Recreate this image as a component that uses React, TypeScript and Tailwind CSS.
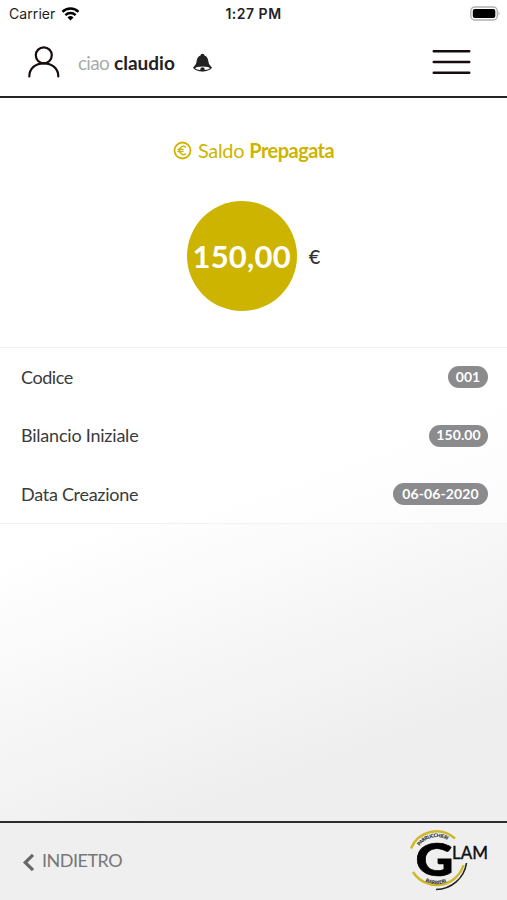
import type { ReactNode } from "react";

const rows = [
  { label: "Codice", value: "001", labelClass: "tracking-[-0.45px]", pill: "w-[40px]" },
  { label: "Bilancio Iniziale", value: "150.00", labelClass: "tracking-[-0.22px]", pill: "w-[59px]" },
  { label: "Data Creazione", value: "06-06-2020", labelClass: "tracking-[-0.28px]", pill: "w-[95px]" },
];

function StatusBar() {
  return (
    <div className="grid h-[27px] grid-cols-3 items-center pl-[9px] pr-[6px] font-['Inter',sans-serif] text-[14px] text-[#222]">
      <div className="flex items-center gap-[6px]">
        <span className="tracking-[0.08px]">Carrier</span>
        <svg width="19" height="14" viewBox="0 0 18 14" fill="none" stroke="#000" strokeWidth="2.5">
          <path d="M1 4.9a11.4 11.4 0 0 1 16 0" />
          <path d="M3.9 8.2a7.3 7.3 0 0 1 10.2 0" />
          <path d="M9 13.5 6 10.5a4.3 4.3 0 0 1 6 0Z" fill="#000" stroke="none" />
        </svg>
      </div>
      <div className="-ml-[3px] whitespace-nowrap text-center font-semibold tracking-[0.5px]">1:27 PM</div>
      <svg className="justify-self-end" width="31" height="16" viewBox="0 0 31 16">
        <rect x="0.8" y="1" width="26.5" height="13" rx="4" fill="#fff" stroke="#b0b0b0" strokeWidth="1.4" />
        <rect x="2.8" y="3" width="22.5" height="9" rx="2" fill="#000" />
        <path d="M28.5 5.5q2.3 2 0 4Z" fill="#b0b0b0" />
      </svg>
    </div>
  );
}

function Header() {
  return (
    <header className="flex h-[71px] items-center border-b-2 border-[#262626] pl-7 pr-9">
      <svg width="32" height="32" viewBox="0 0 32 32" fill="none" stroke="#180b0b" strokeWidth="2.2" strokeLinecap="round">
        <circle cx="15.8" cy="9.3" r="8" />
        <path d="M1.3 30.5C1.3 22.5 7.5 17.3 15.8 17.3s14.5 5.2 14.5 13.2" />
      </svg>
      <div className="ml-[18px] flex items-baseline gap-[5px] pt-[3px] text-[19px]">
        <span className="tracking-[-0.7px] text-[#aaa]">ciao</span>
        <span className="font-bold text-[#222]">claudio</span>
      </div>
      <svg className="ml-[17px] mt-[3px]" width="21" height="20" viewBox="0 0 21 20">
        <path d="M10.5.8c-1.2 0-1.9.8-2 1.8C5.6 3.6 4.9 6.6 4.5 9c-.4 2.2-1.4 3.6-3.4 5.4.5 2.4 5.2 3.9 9.4 3.9s8.9-1.5 9.4-3.9c-2-1.8-3-3.2-3.4-5.4-.4-2.4-1.1-5.4-4-6.4-.1-1-.8-1.8-2-1.8Z" fill="#222" />
        <ellipse cx="10.5" cy="15.2" rx="7.2" ry="1.7" fill="#fff" />
        <circle cx="10.5" cy="16.4" r="2.2" fill="#222" />
      </svg>
      <svg className="ml-auto" width="39" height="26" viewBox="0 0 39 26" stroke="#180b0f" strokeWidth="2.6" strokeLinecap="round">
        <path d="M1.8 2.3h35.4M1.8 13h35.4M1.8 23.8h35.4" />
      </svg>
    </header>
  );
}

function Balance() {
  return (
    <section className="flex h-[249px] flex-col items-center pt-[38px]">
      <h1 className="flex h-7 items-center text-[20px] text-[#cdb400]">
        <svg className="mr-[6px]" width="19" height="19" viewBox="0 0 19 19" fill="none" stroke="currentColor" strokeWidth="1.8">
          <circle cx="9.5" cy="9.5" r="8" />
          <path d="M13 6.4a4 4 0 1 0 0 6.2M4.4 8.5h6.2M4.4 10.6h6.2" strokeWidth="1.4" />
        </svg>
        <span className="pb-px tracking-[-0.3px]">Saldo</span>
        <span className="ml-[5px] pb-px font-bold tracking-[-0.55px]">Prepagata</span>
      </h1>
      <div className="mt-[37px] flex items-center">
        <div className="flex size-[110px] items-center justify-center rounded-full bg-[#cdb400] text-[31px] font-bold tracking-[0.2px] text-white">
          150,00
        </div>
        <span className="ml-3 pb-px text-[20px] font-medium text-[#333]">€</span>
      </div>
    </section>
  );
}

function Row({ label, labelClass, children }: { label: string; labelClass: string; children: ReactNode }) {
  return (
    <li className="flex h-[58.5px] items-center justify-between pl-[21px] pr-[19px]">
      <span className={`text-[18px] text-[#3a3a3a] ${labelClass}`}>{label}</span>
      {children}
    </li>
  );
}

function Logo() {
  return (
    <svg className="overflow-visible" width="80" height="62" viewBox="0 0 80 62" fill="none">
      <path d="M2 18.5A27.5 27.5 0 0 1 46 8.5" stroke="#cdb92b" strokeWidth="2.4" />
      <path d="M4 42A28 28 0 0 0 54.5 35" stroke="#cdb92b" strokeWidth="2.4" />
      <path d="M27 59.5A31 31 0 0 0 57.5 33" stroke="#222" strokeWidth="1.6" />
      <defs>
        <path id="upper-arc" d="M10.5 16A21 21 0 0 1 39 10.5" />
        <path id="lower-arc" d="M15.5 51A25 25 0 0 0 39 51.5" />
      </defs>
      <text className="font-['Lato',sans-serif] text-[5px] font-black" fill="#222">
        <textPath href="#upper-arc" textLength="31">PARRUCCHIERI</textPath>
      </text>
      <text className="font-['Lato',sans-serif] text-[5px] font-black" fill="#222">
        <textPath href="#lower-arc" startOffset="1" textLength="22">BARBIERI</textPath>
      </text>
      <text x="6.5" y="45.5" className="font-['Lato',sans-serif] text-[46px] font-black" fill="#000" stroke="#000" strokeWidth="0.7" textLength="38" lengthAdjust="spacingAndGlyphs">G</text>
      <text x="43" y="28.5" className="font-['Lato',sans-serif] text-[17px] font-medium" fill="#111" stroke="#111" strokeWidth="0.3" textLength="36" lengthAdjust="spacingAndGlyphs">LAM</text>
    </svg>
  );
}

export default function App() {
  return (
    <div className="flex h-[900px] w-full flex-col overflow-hidden bg-[linear-gradient(160deg,#fff_52%,#eeeeee_82%)] font-['Lato',sans-serif]">
      <StatusBar />
      <Header />
      <Balance />
      <ul className="h-[177px] border-y border-[#f2f2f2] bg-white/50">
        {rows.map((r) => (
          <Row key={r.label} label={r.label} labelClass={r.labelClass}>
            <span className={`flex h-[22px] items-center justify-center rounded-full bg-[#8b8b8e] pb-[2px] text-[14px] font-bold tracking-[0.1px] text-white ${r.pill}`}>
              {r.value}
            </span>
          </Row>
        ))}
      </ul>
      <footer className="mt-auto flex h-[79px] items-start justify-between border-t-2 border-[#2d2d2d] bg-[#efefef] pl-[22px] pr-[18px]">
        <button className="mt-6 flex items-center text-[18px] tracking-[-0.5px] text-[#777]">
          <svg className="mr-[7px] mt-[3px]" width="13" height="19" viewBox="0 0 13 19" fill="none" stroke="#686868" strokeWidth="3.2">
            <path d="M11 1.8 3.2 9.5l7.8 7.7" />
          </svg>
          INDIETRO
        </button>
        <div className="mt-[7px]">
          <Logo />
        </div>
      </footer>
    </div>
  );
}
